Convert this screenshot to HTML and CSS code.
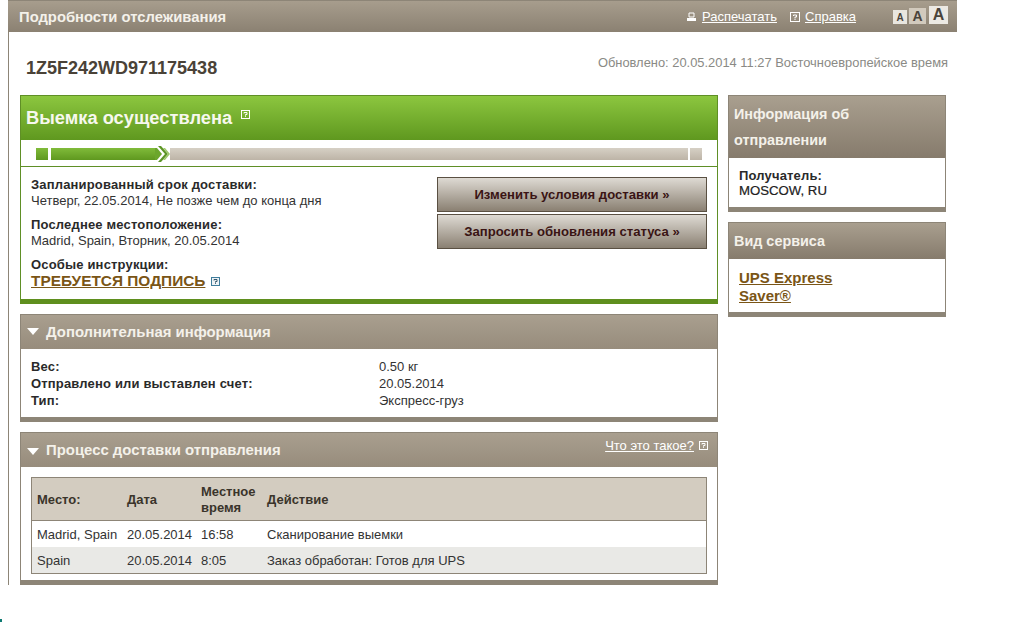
FILE: index.html
```html
<!DOCTYPE html>
<html lang="ru">
<head>
  <meta charset="UTF-8" />
  <title>Подробности отслеживания</title>
  <link rel="stylesheet" href="styles.css">
</head>
<body>
  <div class="page">
    <!-- top bar -->
    <div class="top-bar">
      <div class="top-title">Подробности отслеживания</div>
      <div class="top-links">
        <svg class="ico-print" width="9" height="9" viewBox="0 0 9 9"><path d="M2 1h5v4H2z" fill="none" stroke="#fff"/><path d="M0 6h9v3H0z" fill="#fff"/></svg>
        <a href="#" class="print-link">Распечатать</a>
        <svg class="ico-help" width="10" height="10" viewBox="0 0 10 10"><rect x=".5" y=".5" width="9" height="9" fill="none" stroke="#fff"/><path d="M3.500 4V3h3v2H5v1.500M5 7v1" fill="none" stroke="#fff"/></svg>
        <a href="#">Справка</a>
      </div>
      <div class="font-sizes">
        <span class="fs fs-small">A</span>
        <span class="fs fs-mid">A</span>
        <span class="fs fs-large">A</span>
      </div>
    </div>

    <div class="content">
      <div class="track-row">
        <div class="track-number">1Z5F242WD971175438</div>
        <div class="updated">Обновлено: 20.05.2014 11:27 Восточноевропейское время</div>
      </div>

      <div class="columns">
        <!-- main column -->
        <div class="main-col">
          <div class="status-card">
            <div class="status-head">
              Выемка осуществлена
              <svg class="status-help" width="9" height="9" viewBox="0 0 9 9"><rect x=".5" y=".5" width="8" height="8" fill="none" stroke="#fff"/><path d="M3 3.500V2.500h3v2H4.500v1.200M4.500 6.200v.8" fill="none" stroke="#fff"/></svg>
            </div>
            <div class="progress">
              <span class="seg seg-start"></span>
              <span class="seg seg-done"></span>
              <svg class="seg-arrow" width="15" height="18" viewBox="0 0 15 18">
                <path d="M0 3h2l5 6-5 6H0z" fill="#6ca62c"/>
                <path d="M3 1h3l7 8-7 8H3l7-8z" fill="#5c9426"/>
                <path d="M8 3h2l5 6-5 6H8l5-6z" fill="#9cc76a"/>
              </svg>
              <span class="seg seg-todo"></span>
              <span class="seg seg-end"></span>
            </div>
            <div class="status-body">
              <div class="status-info">
                <div class="info-block">
                  <div class="label">Запланированный срок доставки:</div>
                  <div>Четверг, 22.05.2014, Не позже чем до конца дня</div>
                </div>
                <div class="info-block">
                  <div class="label">Последнее местоположение:</div>
                  <div>Madrid, Spain, Вторник, 20.05.2014</div>
                </div>
                <div class="info-block">
                  <div class="label">Особые инструкции:</div>
                  <div class="sign-row">
                    <a href="#" class="brown-link sign-link">ТРЕБУЕТСЯ ПОДПИСЬ</a>
                    <svg width="9" height="9" viewBox="0 0 9 9"><rect x=".5" y=".5" width="8" height="8" fill="#eef3f6" stroke="#3f7d9c"/><path d="M3 3.500V2.500h3v2H4.500v1.200M4.500 6.200v.8" fill="none" stroke="#33566b"/></svg>
                  </div>
                </div>
              </div>
              <div class="status-actions">
                <a href="#" class="action-btn">Изменить условия доставки »</a>
                <a href="#" class="action-btn">Запросить обновления статуса »</a>
              </div>
            </div>
          </div>

          <div class="box box-extra">
            <div class="box-head">
              <span class="tri"></span>Дополнительная информация
            </div>
            <div class="extra-body">
              <div class="extra-row"><div class="extra-key label">Вес:</div><div>0.50 кг</div></div>
              <div class="extra-row"><div class="extra-key label">Отправлено или выставлен счет:</div><div>20.05.2014</div></div>
              <div class="extra-row"><div class="extra-key label">Тип:</div><div>Экспресс-груз</div></div>
            </div>
          </div>

          <div class="box box-history">
            <div class="box-head history-head">
              <div><span class="tri"></span>Процесс доставки отправления</div>
              <div class="what-is">
                <a href="#">Что это такое?</a>
                <svg width="9" height="9" viewBox="0 0 9 9"><rect x=".5" y=".5" width="8" height="8" fill="none" stroke="#fff"/><path d="M3 3.500V2.500h3v2H4.500v1.200M4.500 6.200v.8" fill="none" stroke="#fff"/></svg>
              </div>
            </div>
            <div class="history-body">
              <table class="history">
                <thead>
                  <tr><th class="col-place">Место:</th><th class="col-date">Дата</th><th class="col-time">Местное время</th><th>Действие</th></tr>
                </thead>
                <tbody>
                  <tr><td>Madrid, Spain</td><td>20.05.2014</td><td>16:58</td><td>Сканирование выемки</td></tr>
                  <tr class="alt"><td>Spain</td><td>20.05.2014</td><td>8:05</td><td>Заказ обработан: Готов для UPS</td></tr>
                </tbody>
              </table>
            </div>
          </div>
        </div>

        <!-- right column -->
        <div class="side-col">
          <div class="box side-box">
            <div class="side-head">Информация об отправлении</div>
            <div class="side-body">
              <div class="label">Получатель:</div>
              <div class="dest">MOSCOW, RU</div>
            </div>
          </div>
          <div class="box side-box">
            <div class="side-head">Вид сервиса</div>
            <div class="service-body">
              <a href="#" class="brown-link service-link">UPS Express<br>Saver®</a>
            </div>
          </div>
        </div>
      </div>
    </div>
  </div>
  <div class="speck"></div>
</body>
</html>
```

FILE: styles.css
```css
html, body { margin: 0; padding: 0; background: #fff; }
body { font-family: 'Liberation Sans', Arial, sans-serif; font-size: 13px; color: #333; }
a { color: inherit; }

.page { width: 949px; margin-left: 8px; }

/* ---------- TOP BAR ---------- */
.top-bar { display: flex; align-items: center; height: 32px; box-sizing: border-box; border-top: 1px solid #8d8577; padding-left: 11px; background: linear-gradient(#a79d8d, #8b8172); color: #fff; }
.top-title { flex: 1; font-size: 14.800px; font-weight: bold; color: #f4f1ea; }
.top-links { display: flex; align-items: center; font-size: 13px; margin-right: 37px; }
.top-links a { color: #fff; }
.ico-print { margin-right: 6px; }
.print-link { margin-right: 13px; }
.ico-help { margin-right: 5px; }

.font-sizes { display: flex; align-items: flex-end; gap: 2px; margin-right: 9px; margin-top: -3px; }
.fs { display: flex; align-items: center; justify-content: center; font-weight: bold; color: #4a443b; }
.fs-small { width: 14px; height: 14px; font-size: 10px; background: #e9e6df; }
.fs-mid { width: 17px; height: 16px; font-size: 14px; background: #d2cabd; margin-right: 1px; }
.fs-large { width: 19px; height: 18px; font-size: 16px; background: #ece9e3; }

/* ---------- CONTENT ---------- */
.content { border-left: 1px solid #8d8577; padding-left: 11px; height: 553px; }
.track-row { display: flex; justify-content: space-between; height: 63px; padding: 0 9px 0 6px; }
.track-number { font-size: 18px; font-weight: bold; color: #4a4237; margin-top: 26px; }
.updated { color: #8a8a85; font-size: 12.900px; margin-top: 23px; line-height: 15px; }

.columns { display: flex; gap: 10px; align-items: flex-start; }
.main-col { width: 698px; display: flex; flex-direction: column; gap: 10px; }
.side-col { width: 218px; display: flex; flex-direction: column; gap: 10px; }

.label { font-weight: bold; color: #2a2a2a; letter-spacing: .17px; }

/* ---------- STATUS CARD ---------- */
.status-card { border: 1px solid #5f8f26; border-bottom: 5px solid #5f8f1e; box-sizing: border-box; height: 209px; }
.status-head { height: 44px; box-sizing: border-box; padding: 12px 0 0 5px; font-size: 18.300px; font-weight: bold; color: #f7f8ee; line-height: 20px; background: linear-gradient(#8cc63f, #5f981f); }
.status-help { vertical-align: 5px; margin-left: 4px; }

.progress { display: flex; align-items: center; height: 27px; box-sizing: border-box; padding: 2px 0 0 15px; border-bottom: 1px solid #5f8f26; }
.seg { display: block; height: 12px; }
.seg-start { width: 12px; background: linear-gradient(#80bb3a, #5f981f); margin-right: 3px; }
.seg-done { width: 104px; background: linear-gradient(#80bb3a, #5f981f); }
.seg-arrow { flex: none; }
.seg-todo { width: 518px; background: linear-gradient(#d6d0c5, #bdb4a7); margin-right: 2px; }
.seg-end { width: 12px; background: linear-gradient(#d6d0c5, #bdb4a7); }

.status-body { display: flex; justify-content: space-between; padding: 10px 10px 0 10px; }
.status-info { display: flex; flex-direction: column; gap: 8px; line-height: 16px; }
.sign-row { display: flex; align-items: center; gap: 6px; }
.brown-link { color: #7a5516; font-weight: bold; font-size: 15px; }
.sign-link { font-size: 15.400px; }
.service-link { display: inline-block; line-height: 18px; }

.status-actions { display: flex; flex-direction: column; gap: 2px; }
.action-btn { display: flex; align-items: center; justify-content: center; width: 270px; height: 35px; box-sizing: border-box; border: 1px solid #5a5042; background: linear-gradient(#dedad3, #8a8072); color: #3a1414; font-size: 13.100px; font-weight: bold; text-decoration: none; }

/* ---------- BOXES ---------- */
.box { border: 1px solid #8d8577; border-bottom: 5px solid #8d8577; box-sizing: border-box; }
.box-head { display: flex; align-items: center; height: 34px; box-sizing: border-box; padding: 0 0 1px 6px; font-size: 14.900px; font-weight: bold; color: #f4f1ea; background: linear-gradient(#a99f8f, #978c7c); }
.tri { display: inline-block; width: 0; height: 0; border-left: 6px solid transparent; border-right: 6px solid transparent; border-top: 7px solid #fff; margin-right: 7px; }

.box-extra { height: 108px; }
.extra-body { padding: 9px 10px 0; line-height: 17px; }
.extra-row { display: flex; }
.extra-key { width: 348px; }

.box-history { height: 153px; }
.history-head { justify-content: space-between; }
.what-is { display: flex; align-items: center; gap: 5px; font-size: 13px; font-weight: normal; color: #fff; margin: -8px 9px 0 0; }
.history-body { padding: 10px 10px 0; }
table.history { width: 676px; border-collapse: collapse; border: 1px solid #8d8577; table-layout: fixed; }
.history th { height: 41px; padding: 1px 0 0 5px; background: #d3ccc0; border-bottom: 1px solid #8d8577; text-align: left; font-weight: bold; color: #3a342b; line-height: 16px; }
.history td { height: 26px; padding: 0 0 0 5px; }
.history .alt td { background: #e9e9e6; }
.col-place { width: 85px; }
.col-date { width: 69px; }
.col-time { width: 61px; }

/* ---------- SIDE COLUMN ---------- */
.side-head { padding: 5px; font-size: 14.400px; font-weight: bold; line-height: 26px; color: #f4f1ea; background: linear-gradient(#a99f8f, #867b6c); }
.side-body { padding: 10px; line-height: 15px; height: 49px; box-sizing: border-box; }
.dest { color: #222; font-size: 13.200px; -webkit-text-stroke: .2px #222; }
.service-body { padding: 10px 10px 7px; line-height: 18px; height: 53px; box-sizing: border-box; }

.speck { position: absolute; left: 0; top: 619px; width: 2px; height: 3px; background: #0d7a72; }
```
